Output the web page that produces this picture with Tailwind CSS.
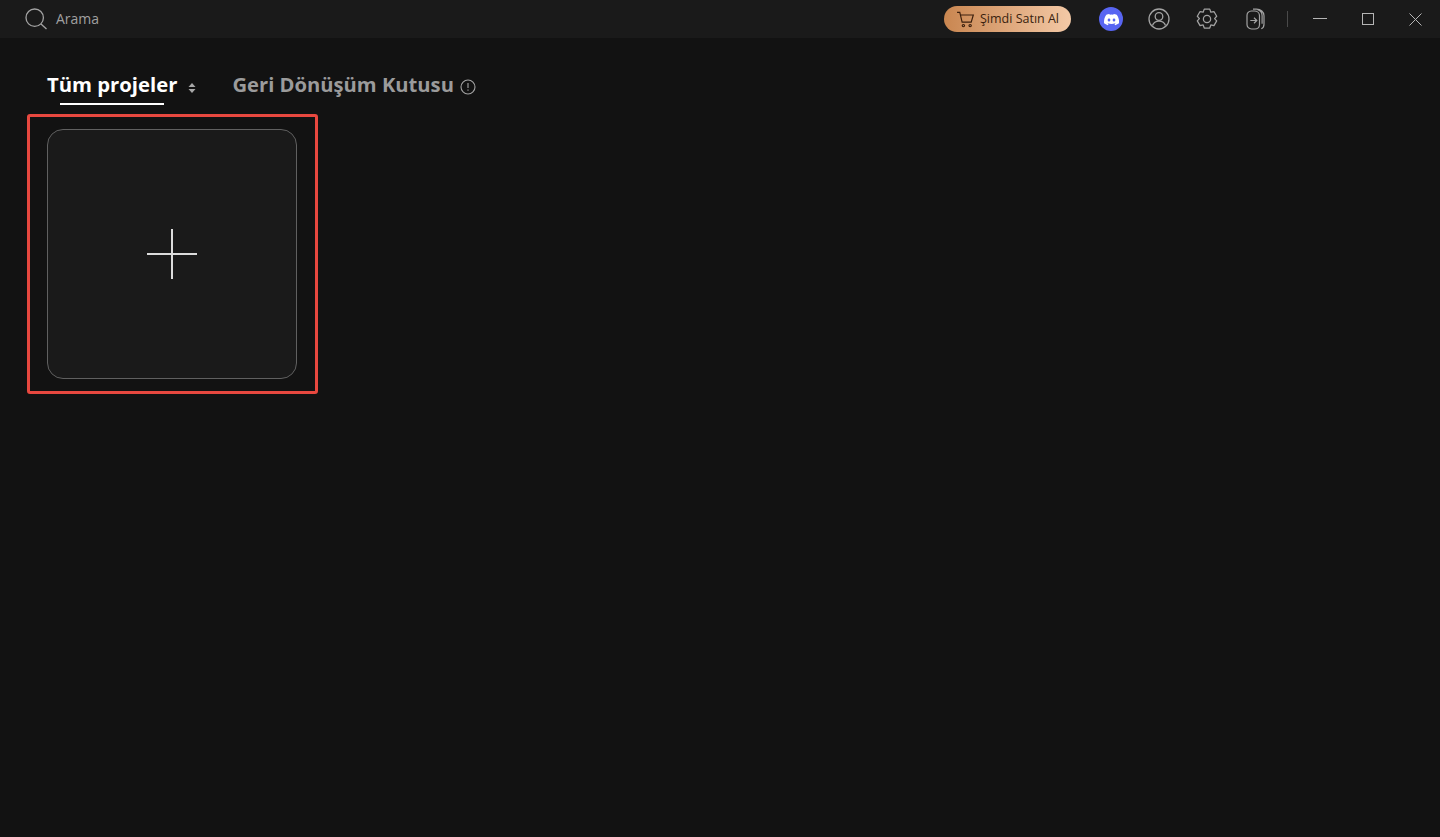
<!DOCTYPE html>
<html lang="tr">
<head>
<meta charset="utf-8">
<title>Projeler</title>
<script src="https://cdn.jsdelivr.net/npm/@tailwindcss/browser@4"></script>
</head>
<body class="m-0 bg-[#121212] font-['Open_Sans','Noto_Sans',sans-serif]">
<div class="flex h-[837px] w-[1440px] flex-col overflow-hidden bg-[#121212]">
  <header class="flex h-[38px] items-center bg-[#1a1a1a] pl-[25px]">
    <svg class="h-[23px] w-[23px]" viewBox="0 0 23 23" fill="none" stroke="#a3a3a3" stroke-width="1.3"><circle cx="9.7" cy="9.7" r="8.7"/><path d="M16 16l5.5 5"/></svg>
    <span class="ml-[8px] text-[14px] leading-none text-[#a0a0a0]">Arama</span>
    <div class="ml-auto flex items-center">
      <div class="flex h-[26px] w-[127px] items-center rounded-[13px] bg-gradient-to-r from-[#c98650] to-[#f3c9a6] pl-[12px] text-[#3a1f0e]">
        <svg class="h-[19px] w-[19px]" viewBox="0 0 18 18" fill="none" stroke="#3a1f0e" stroke-width="1.1"><path d="M1 2.2h2.6l2.2 9.3h8.6l2-6.8H4.4"/><circle cx="7" cy="14.8" r="1.1"/><circle cx="13.4" cy="14.8" r="1.1"/></svg>
        <span class="ml-[5px] text-[12.5px] leading-none whitespace-nowrap">Şimdi Satın Al</span>
      </div>
      <div class="ml-[28px] flex h-[24px] w-[24px] items-center justify-center rounded-full bg-[#5865f2]">
        <svg class="h-[15px] w-[15px]" viewBox="0 0 24 24" fill="#ffffff"><path d="M20.3 4.4A19.8 19.8 0 0 0 15.4 3l-.6 1.3a18.3 18.3 0 0 0-5.5 0L8.6 3a19.7 19.7 0 0 0-4.9 1.4C.5 9 -.3 13.500 .1 18a19.900 19.900 0 0 0 6 3l1.300-2c-.7-.3-1.300-.6-1.900-1l.5-.4a14.200 14.200 0 0 0 12.100 0l.5.4c-.6.4-1.300.700-1.900 1l1.300 2a19.900 19.900 0 0 0 6-3c.5-5.200-.8-9.700-3.700-13.600zM8 15.200c-1.200 0-2.200-1.100-2.200-2.400S6.800 10.400 8 10.400s2.200 1.100 2.200 2.400-1 2.400-2.200 2.400zm8 0c-1.200 0-2.200-1.100-2.200-2.400s1-2.400 2.200-2.400 2.200 1.100 2.200 2.400-1 2.400-2.200 2.400z"/></svg>
      </div>
      <svg class="ml-[25px] h-[22px] w-[22px]" viewBox="0 0 22 22" fill="none" stroke="#a3a3a3" stroke-width="1.300"><circle cx="11" cy="11" r="10"/><circle cx="11" cy="8.500" r="3.800"/><path d="M4.500 17.500c1-3 3.500-4.300 6.500-4.300s5.500 1.300 6.500 4.300"/></svg>
      <svg class="ml-[26px] h-[22px] w-[22px]" viewBox="2 1.500 20 20" fill="none" stroke="#a3a3a3" stroke-width="1.150" stroke-linejoin="round"><path d="M9.500 2.500h5l1 2.800 2.800-.6 2.500 4.300-1.900 2.100 1.900 2.100-2.500 4.300-2.800-.6-1 2.800h-5l-1-2.800-2.800.6-2.500-4.300 1.900-2.100-1.900-2.100 2.500-4.300 2.800.6z"/><circle cx="12" cy="11.500" r="3.300"/></svg>
      <svg class="ml-[28px] h-[22px] w-[19px]" viewBox="0 0 19 22" fill="none" stroke="#a3a3a3" stroke-width="1.200"><path d="M1 7.500C1 5 3 3.200 5.500 3h2.800c3 0 5.200 2 5.200 4.700v8.800c0 2.600-2 4.500-4.600 4.500H5.500C3 21 1 19 1 16.500z"/><path d="M7 1.200h3.500c4.300 0 7.500 2.800 7.500 6.500v8.500c0 2.200-1 3.800-2.700 4.600M11.500 1.700c2.800.8 4.600 3 4.600 6v8"/><path d="M4.300 12.500h6.400M8 9.800l2.800 2.700L8 15.200"/></svg>
      <div class="ml-[22px] h-[16px] w-px bg-[#4a4a4a]"></div>
      <svg class="ml-[25px] h-[14px] w-[14px]" viewBox="0 0 14 14" fill="none" stroke="#b5b5b5" stroke-width="1"><path d="M0 6.500h14"/></svg>
      <svg class="ml-[35px] h-[12px] w-[12px]" viewBox="0 0 12 12" fill="none" stroke="#b5b5b5" stroke-width="1"><rect x=".5" y=".5" width="11" height="11"/></svg>
      <svg class="mr-[18px] ml-[35px] h-[13px] w-[13px]" viewBox="0 0 13 13" fill="none" stroke="#b5b5b5" stroke-width="1"><path d="M.5.500l12 12M12.500.500l-12 12"/></svg>
    </div>
  </header>
  <main class="pl-[27px]">
    <div class="flex h-[76px] items-start pl-[20px] pt-[32px]">
      <div class="relative flex h-[29px] items-center">
        <span class="text-[20.3px] leading-none font-bold whitespace-nowrap text-white">Tüm projeler</span>
        <div class="absolute top-[33px] left-[13px] h-[2px] w-[104px] bg-white"></div>
      </div>
      <svg class="mt-[13px] ml-[11px] h-[10px] w-[8px]" viewBox="0 0 8 10" fill="#a8a8a8"><path d="M4 0l3.500 4H.5zM4 10L.5 6h7z"/></svg>
      <span class="ml-[36px] flex h-[29px] items-center text-[20.2px] leading-none font-bold whitespace-nowrap text-[#9b9b9b]">Geri Dönüşüm Kutusu</span>
      <svg class="mt-[9px] ml-[6px] h-[16px] w-[16px]" viewBox="0 0 16 16" fill="none" stroke="#a3a3a3" stroke-width="1.100"><circle cx="8" cy="8" r="7"/><path d="M8 4v5M8 10.500v1.300"/></svg>
    </div>
    <div class="h-[280px] w-[291px] rounded-[3px] border-[3px] border-[#e8483f] pt-[12px] pl-[17px]">
      <div class="flex h-[250px] w-[250px] items-center justify-center rounded-[16px] border border-[#606060] bg-[#1a1a1a]">
        <svg class="h-[50px] w-[50px]" viewBox="0 0 50 50" fill="none" stroke="#dcdcdc" stroke-width="2"><path d="M25 0v50M0 25h50"/></svg>
      </div>
    </div>
  </main>
</div>
</body>
</html>
